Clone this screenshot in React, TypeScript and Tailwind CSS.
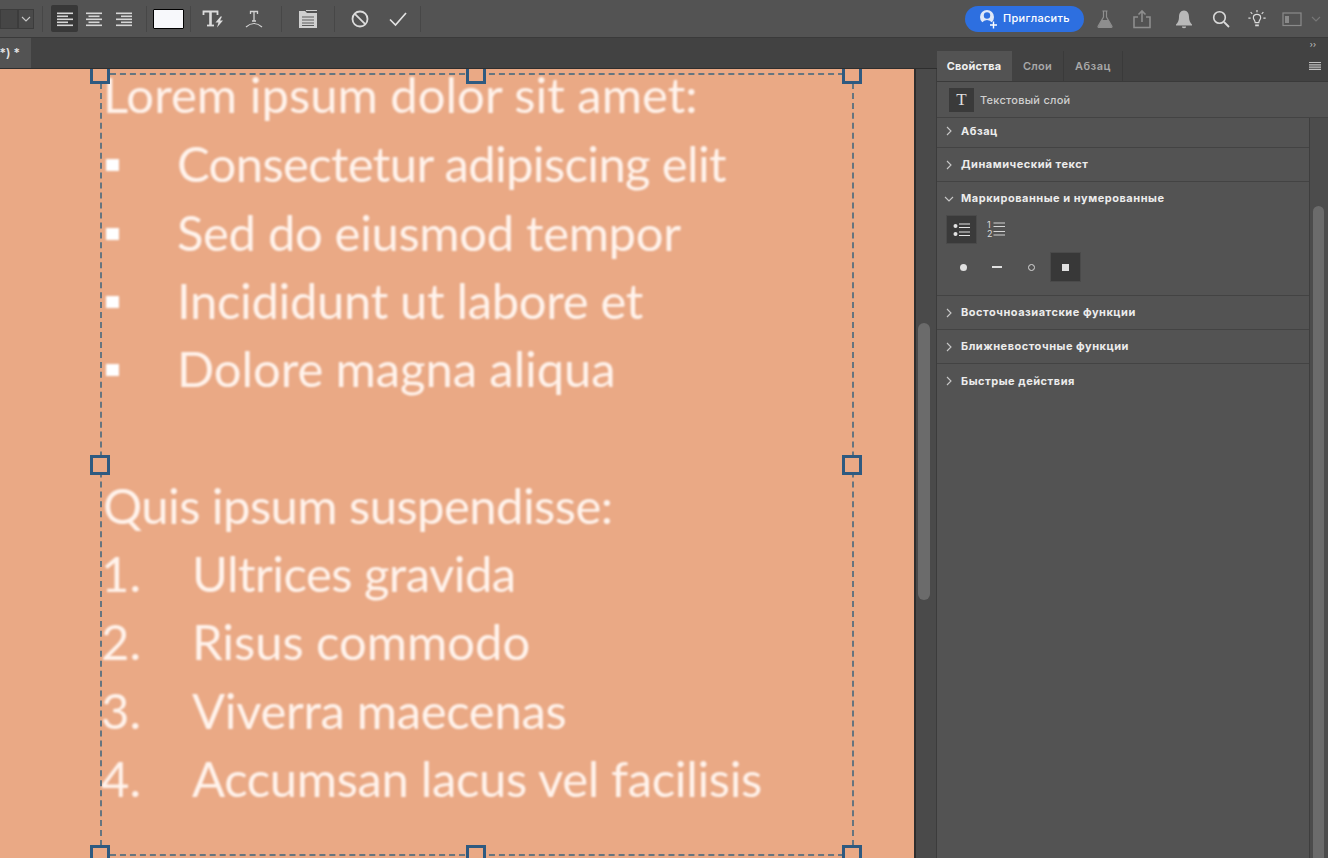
import React from "react";

const Sep = ({ className = "" }: { className?: string }) => <div className={`w-px h-[26px] bg-[#474747] ${className}`} />;

const Ico = ({ children, w = 24, h = 24, className = "" }: { children: React.ReactNode; w?: number; h?: number; className?: string }) => (
  <svg width={w} height={h} viewBox={`0 0 ${w} ${h}`} fill="none" className={className}>{children}</svg>
);

const AlignIcon = ({ kind }: { kind: "l" | "c" | "r" }) => (
  <Ico w={16} h={18}>
    {[3, 6, 9, 12, 15].map((y, i) => {
      const len = i % 2 === 0 ? 16 : 11;
      const x = kind === "l" ? 0 : kind === "r" ? 16 - len : (16 - len) / 2;
      return <rect key={y} x={x} y={y - 0.5} width={len} height={1.6} fill="#d6d6d6" />;
    })}
  </Ico>
);

const Chevron = ({ open = false }: { open?: boolean }) => (
  <Ico w={10} h={10} className="shrink-0">
    {open ? <path d="M1 3 L5 7 L9 3" stroke="#c8c8c8" strokeWidth="1.1" /> : <path d="M3 1 L7 5 L3 9" stroke="#c8c8c8" strokeWidth="1.1" />}
  </Ico>
);

const Section = ({ title, first = false, last = false }: { title: string; first?: boolean; last?: boolean }) => (
  <div className={`${first ? "h-[30px] pb-[3px]" : "h-[34px]"} ${last ? "" : "border-b border-[#434343]"} flex items-center pl-[7px] gap-[7px]`}>
    <Chevron />
    <span className="text-[11px] font-bold text-[#ececec] tracking-[0.52px]">{title}</span>
  </div>
);

const Handle = ({ className }: { className: string }) => (
  <div className={`absolute w-[20px] border-[3px] border-[#2f5a80] bg-[#eaa985] ${className}`} />
);

const bullets = [
  { t: "Consectetur adipiscing elit", c: "tracking-[-0.65px]" },
  { t: "Sed do eiusmod tempor", c: "tracking-[-0.35px]" },
  { t: "Incididunt ut labore et", c: "tracking-[-0.35px]" },
  { t: "Dolore magna aliqua", c: "tracking-[-0.1px]" },
];
const numbers = [
  { t: "Ultrices gravida", c: "tracking-[-0.55px]" },
  { t: "Risus commodo", c: "tracking-[-0.05px]" },
  { t: "Viverra maecenas", c: "tracking-[-0.35px]" },
  { t: "Accumsan lacus vel facilisis", c: "tracking-[-0.35px]" },
];

export default function App() {
  return (
    <div className="w-[1328px] h-[858px] overflow-hidden flex flex-col bg-[#535353] font-['Inter','Liberation_Sans',sans-serif]">
      {/* Top options bar */}
      <div className="h-[38px] shrink-0 flex items-center bg-[#535353] border-b border-[#3a3a3a]">
        <div className="w-[18px] h-[20px] bg-[#464646] border border-[#3c3c3c]" />
        <div className="w-[16px] h-[20px] bg-[#4a4a4a] border border-[#3c3c3c] flex items-center justify-center">
          <Chevron open />
        </div>
        <Sep className="ml-[8px]" />
        <div className="ml-[8px] w-[27px] h-[27px] bg-[#383838] rounded-[2px] flex items-center justify-center"><AlignIcon kind="l" /></div>
        <div className="w-[30px] flex justify-center ml-[1px]"><AlignIcon kind="c" /></div>
        <div className="w-[30px] flex justify-center"><AlignIcon kind="r" /></div>
        <Sep className="ml-[7px]" />
        <div className="ml-[6px] w-[31px] h-[20px] bg-[#f7f8fb] border border-black rounded-[1px]" />
        <Sep className="ml-[6px]" />
        <div className="w-[44px] flex justify-center">
          <Ico w={22} h={20}>
            <path d="M1.5 6 V2.5 H15.5 V6" stroke="#dcdcdc" strokeWidth="1.8" />
            <path d="M8.5 2.5 V16 " stroke="#dcdcdc" strokeWidth="2.6" />
            <path d="M5 16.5 H12" stroke="#dcdcdc" strokeWidth="1.8" />
            <path d="M18.5 7.5 L13.5 13.5 H16.5 L15 18.5 L21 11.5 H18 L20 7.5 Z" fill="#dcdcdc" />
          </Ico>
        </div>
        <div className="w-[38px] flex justify-center">
          <Ico w={20} h={20}>
            <path d="M6.5 5 V2.5 H13.5 V5 M10 2.5 V12 M8 12 H12" stroke="#d2d2d2" strokeWidth="1.3" />
            <path d="M2 18 Q10 11 18 18" stroke="#d2d2d2" strokeWidth="1.2" />
          </Ico>
        </div>
        <Sep className="ml-[8px]" />
        <div className="w-[52px] flex justify-center">
          <Ico w={20} h={20}>
            <path d="M1 2 H7 L9 4 H19 V19 H1 Z" fill="#d0d0d0" />
            <path d="M8 1.5 H19" stroke="#d0d0d0" strokeWidth="1" />
            <path d="M4 8 H16 M4 11 H16 M4 14 H16 M4 16.5 H16" stroke="#5c5c5c" strokeWidth="1" />
          </Ico>
        </div>
        <Sep />
        <div className="w-[50px] flex justify-center">
          <Ico w={20} h={20}>
            <circle cx="10" cy="10" r="7.5" stroke="#dcdcdc" strokeWidth="1.8" />
            <path d="M4.8 4.8 L15.2 15.2" stroke="#dcdcdc" strokeWidth="1.8" />
          </Ico>
        </div>
        <div className="w-[26px] flex justify-center">
          <Ico w={20} h={20}>
            <path d="M2 10.5 L7.5 16 L18 4" stroke="#e2e2e2" strokeWidth="1.7" />
          </Ico>
        </div>
        <Sep className="ml-[9px]" />
        <div className="flex-1" />
        <div className="w-[119px] h-[26px] rounded-full bg-[#2d6fe0] flex items-center pl-[12px] gap-[4px]">
          <Ico w={22} h={22}>
            <circle cx="10" cy="9" r="7" fill="#dfe8f8" />
            <circle cx="10" cy="7.5" r="3.2" fill="#2d6fe0" />
            <path d="M4.5 15 Q10 9 15.5 15 L14 18 H6 Z" fill="#2d6fe0" />
            <path d="M16.5 13.5 V20.5 M13 17 H20" stroke="#fff" strokeWidth="1.4" />
          </Ico>
          <span className="text-[11px] font-medium text-white tracking-[0.3px] whitespace-nowrap">Пригласить</span>
        </div>
        <div className="ml-[11px] w-[20px] flex justify-center">
          <Ico w={20} h={20}>
            <path d="M7.5 2 H12.5 M8.5 2 V8 L3 17.5 Q3 18.5 4 18.5 H16 Q17 18.5 17 17.5 L11.5 8 V2" stroke="#8e8e8e" strokeWidth="1.2" />
            <path d="M6.5 11 H13.5 L17 18.5 H3 Z" fill="#8e8e8e" />
          </Ico>
        </div>
        <div className="ml-[17px] w-[20px] flex justify-center">
          <Ico w={20} h={20}>
            <path d="M6 8 H2 V18.5 H18 V8 H14" stroke="#8e8e8e" strokeWidth="1.6" />
            <path d="M10 13 V2 M6.5 5.5 L10 2 L13.5 5.5" stroke="#8e8e8e" strokeWidth="1.6" />
          </Ico>
        </div>
        <div className="ml-[22px] w-[20px] flex justify-center">
          <Ico w={20} h={20}>
            <path d="M10 1.5 C13.5 1.5 15 4.5 15 8 C15 11.5 16 13.5 18 15.5 V16.5 H2 V15.5 C4 13.5 5 11.5 5 8 C5 4.5 6.5 1.5 10 1.5 Z" fill="#b8b8b8" />
            <path d="M8 17.5 H12 V18.5 Q10 20 8 18.5 Z" fill="#b8b8b8" />
          </Ico>
        </div>
        <div className="ml-[17px] w-[20px] flex justify-center">
          <Ico w={20} h={20}>
            <circle cx="8.5" cy="8.5" r="5.8" stroke="#dadada" strokeWidth="1.6" />
            <path d="M13 13 L18 18" stroke="#dadada" strokeWidth="1.8" />
          </Ico>
        </div>
        <div className="ml-[16px] w-[20px] flex justify-center">
          <Ico w={22} h={22}>
            <path d="M7 9.5 C7 7.5 8.8 6 11 6 C13.2 6 15 7.5 15 9.5 C15 11.5 13 12.5 13 15 H9 C9 12.5 7 11.5 7 9.5 Z" stroke="#dadada" strokeWidth="1.3" />
            <path d="M9 17 H13 V19 H9 Z" fill="#dadada" />
            <path d="M11 1 V3.5 M4 3.5 L5.8 5.3 M18 3.5 L16.2 5.3 M1.5 10 H4 M18 10 H20.5" stroke="#dadada" strokeWidth="1.3" />
          </Ico>
        </div>
        <div className="ml-[15px] w-[20px] flex justify-center">
          <Ico w={20} h={16}>
            <rect x="1" y="2" width="18" height="12.5" stroke="#8a8a8a" strokeWidth="1.2" />
            <rect x="3" y="5" width="4" height="7" fill="#8a8a8a" />
          </Ico>
        </div>
        <div className="ml-[9px] w-[11px] opacity-30"><Chevron open /></div>
        <div className="w-[6px]" />
      </div>

      <div className="flex-1 flex min-h-0">
        {/* Document area */}
        <div className="w-[937px] shrink-0 flex flex-col bg-[#424242]">
          <div className="h-[31px] shrink-0 bg-[#424242] border-b border-[#2e2e2e]">
            <div className="w-[31px] h-[30px] bg-[#535353] flex items-center justify-end pr-[11px]">
              <span className="text-[12px] font-semibold text-[#e4e4e4] whitespace-nowrap">*) *</span>
            </div>
          </div>
          <div className="flex-1 flex min-h-0">
            <div className="w-[914px] shrink-0 relative bg-[#eaa985]">
              <div className="pl-[103px] text-[#fff3ec] font-['Lato',sans-serif] text-[49px] leading-[68.3px] blur-[0.8px]">
                <div className="whitespace-nowrap tracking-[0px] leading-[50.3px] mb-[10px]">Lorem ipsum dolor sit amet:</div>
                {bullets.map(({ t, c }) => (
                  <div key={t} className="flex items-center whitespace-nowrap">
                    <div className="w-[75px] shrink-0 pt-[4px] pl-[3px]"><div className="w-[13px] h-[12px] bg-white" /></div>
                    <span className={`-ml-[1px] ${c}`}>{t}</span>
                  </div>
                ))}
                <div className="h-[68.3px]" />
                <div className="whitespace-nowrap tracking-[-0.57px]">Quis ipsum suspendisse:</div>
                {numbers.map(({ t, c }, i) => (
                  <div key={t} className="flex whitespace-nowrap">
                    <div className="w-[91px] shrink-0 -ml-[2px]">{i + 1}.</div>
                    <span className={c}>{t}</span>
                  </div>
                ))}
              </div>
              {/* Transform box */}
              <div className="absolute left-[100px] top-[4px] w-[754px] h-[783px] border-2 border-dashed border-[#66757f]" />
              <Handle className="left-[90px] top-0 h-[15px] border-t-0" />
              <Handle className="left-[466px] top-0 h-[15px] border-t-0" />
              <Handle className="left-[842px] top-0 h-[15px] border-t-0" />
              <Handle className="left-[90px] top-[386px] h-[20px]" />
              <Handle className="left-[842px] top-[386px] h-[20px]" />
              <Handle className="left-[90px] top-[776px] h-[20px]" />
              <Handle className="left-[466px] top-[776px] h-[20px]" />
              <Handle className="left-[842px] top-[776px] h-[20px]" />
            </div>
            <div className="w-[2px] bg-[#2e2e2e]" />
            <div className="flex-1 bg-[#4a4a4a] pl-[2px] pt-[254px] border-r border-[#3c3c3c]">
              <div className="w-[12px] h-[277px] rounded-full bg-[#6b6b6b]" />
            </div>
          </div>
        </div>

        {/* Right panel */}
        <div className="flex-1 flex flex-col min-w-0 bg-[#535353]">
          <div className="h-[13px] shrink-0 bg-[#424242] flex items-center justify-end pr-[12px]">
            <span className="text-[8px] leading-none text-[#c8c8c8] -mt-[2px]">››</span>
          </div>
          <div className="h-[31px] shrink-0 bg-[#424242] flex border-b border-[#3a3a3a]">
            <div className="w-[75px] bg-[#535353] flex items-center justify-center text-[11px] font-bold text-[#f0f0f0] tracking-[0.2px] pr-[1px]">Свойства</div>
            <div className="w-[52px] border-r border-[#3a3a3a] flex items-center justify-center text-[11px] font-semibold text-[#a8a8a8] tracking-[0.25px]">Слои</div>
            <div className="w-[59px] border-r border-[#3a3a3a] flex items-center justify-center text-[11px] font-semibold text-[#a8a8a8] tracking-[0.5px]">Абзац</div>
            <div className="flex-1 flex items-center justify-end pr-[7px]">
              <Ico w={12} h={10}>
                <path d="M0 1.5 H12 M0 3.8 H12 M0 6.1 H12 M0 8.4 H12" stroke="#c0c0c0" strokeWidth="1.2" />
              </Ico>
            </div>
          </div>
          <div className="h-[36px] shrink-0 flex items-center pl-[12px] gap-[6px] border-b border-[#434343]">
            <div className="w-[25px] h-[24px] bg-[#3a3a3a] flex items-center justify-center font-['Liberation_Serif',serif] text-[17px] text-[#dedede]">T</div>
            <span className="text-[11px] font-medium text-[#d0d0d0] tracking-[0.25px] mt-[2px]">Текстовый слой</span>
          </div>
          <div className="flex-1 flex min-h-0">
            <div className="w-[373px] shrink-0 border-r border-[#3e3e3e] flex flex-col">
              <Section title="Абзац" first />
              <Section title="Динамический текст" />
              <div className="border-b border-[#434343] h-[114px] flex flex-col">
                <div className="h-[33px] shrink-0 flex items-center pl-[7px] gap-[7px]">
                  <Chevron open />
                  <span className="text-[11px] font-bold text-[#ececec] tracking-[0.52px]">Маркированные и нумерованные</span>
                </div>
                <div className="pl-[9px] flex">
                  <div className="w-[31px] h-[29px] bg-[#3a3a3a] border border-[#4a4a4a] flex items-center justify-center">
                    <Ico w={18} h={16}>
                      <circle cx="2.5" cy="4" r="2" fill="#e4e4e4" /><circle cx="2.5" cy="12" r="2" fill="#e4e4e4" />
                      <path d="M6 2 H17 M6 5.5 H17 M6 10 H17 M6 13.5 H17" stroke="#e4e4e4" strokeWidth="1.1" />
                    </Ico>
                  </div>
                  <div className="w-[29px] h-[29px] pl-[10px] flex items-center text-[#dcdcdc]">
                    <div className="relative w-[18px] h-[17px] shrink-0">
                      <span className="absolute left-0 -top-[1px] text-[9px] leading-[9px]">1</span>
                      <span className="absolute left-0 top-[8px] text-[9px] leading-[9px]">2</span>
                      <Ico w={18} h={17} className="absolute inset-0">
                        <path d="M6.5 2 H18 M6.5 5.5 H18 M6.5 10.5 H18 M6.5 14 H18" stroke="#d4d4d4" strokeWidth="1.1" />
                      </Ico>
                    </div>
                  </div>
                </div>
                <div className="pl-[9px] flex items-center mt-[8px] h-[30px]">
                  <div className="w-[34px] flex justify-center"><div className="w-[7px] h-[7px] rounded-full bg-[#e0e0e0]" /></div>
                  <div className="w-[34px] flex justify-center"><div className="w-[10px] h-[2px] bg-[#e0e0e0]" /></div>
                  <div className="w-[34px] flex justify-center"><div className="w-[7px] h-[7px] rounded-full border border-[#d8d8d8]" /></div>
                  <div className="w-[34px] flex justify-center">
                    <div className="w-[31px] h-[30px] bg-[#383838] border border-[#4a4a4a] flex items-center justify-center"><div className="w-[7px] h-[7px] bg-[#e0e0e0]" /></div>
                  </div>
                </div>
              </div>
              <Section title="Восточноазиатские функции" />
              <Section title="Ближневосточные функции" />
              <Section title="Быстрые действия" last />
            </div>
            <div className="flex-1 bg-[#4c4c4c] pl-[3px] pt-[88px]">
              <div className="w-[11px] h-full rounded-t-full bg-[#6b6b6b]" />
            </div>
          </div>
        </div>
      </div>
    </div>
  );
}
